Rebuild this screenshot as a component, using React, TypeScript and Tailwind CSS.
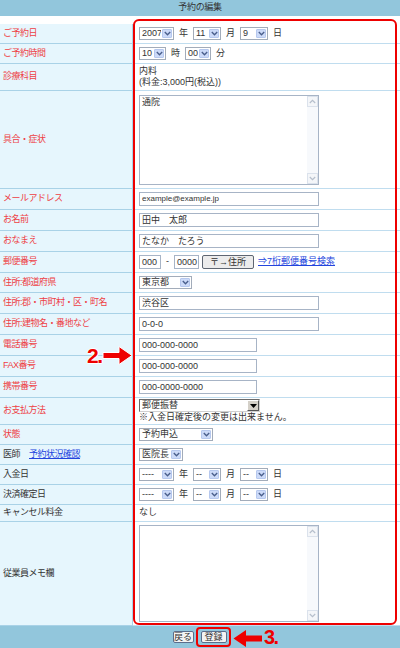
import React from "react";

const Chev = () => (
  <svg width="7" height="5" viewBox="0 0 7 5">
    <path d="M0.8 1L3.5 3.7L6.2 1" fill="none" stroke="#4a5f8c" strokeWidth="1.4" />
  </svg>
);

function Sel({ cls, v }: { cls: string; v: string }) {
  return (
    <div className={`flex h-[13px] items-stretch border border-[#a2acba] bg-white ${cls}`}>
      <span className="flex flex-1 items-center overflow-hidden whitespace-nowrap pl-[2px] leading-none">{v}</span>
      <span className="m-[1px] flex w-[10px] items-center justify-center rounded-[1px] border border-[#b6c8ee] bg-[#ccdaf8]">
        <Chev />
      </span>
    </div>
  );
}

function Inp({ cls, v, small }: { cls: string; v: string; small?: boolean }) {
  return (
    <div className={`flex h-[14px] items-center border border-[#a7b4c6] bg-white pl-[2px] leading-none ${small ? "text-[8px]" : ""} ${cls}`}>
      {v}
    </div>
  );
}

function TextArea({ cls, v }: { cls: string; v: string }) {
  return (
    <div className={`flex border border-[#a7b4c6] bg-white ${cls}`}>
      <div className="flex-1 pl-[2px] pt-[2px] leading-none">{v}</div>
      <div className="flex w-[11px] flex-col justify-between bg-[#f7f9fc]">
        <div className="flex h-[11px] items-center justify-center border border-[#dbe2ec] bg-[#f4f6f9]">
          <svg width="7" height="5" viewBox="0 0 7 5">
            <path d="M0.8 4L3.5 1.3L6.2 4" fill="none" stroke="#b6bfcc" strokeWidth="1.2" />
          </svg>
        </div>
        <div className="flex h-[11px] items-center justify-center border border-[#dbe2ec] bg-[#f4f6f9]">
          <svg width="7" height="5" viewBox="0 0 7 5">
            <path d="M0.8 1L3.5 3.7L6.2 1" fill="none" stroke="#b6bfcc" strokeWidth="1.2" />
          </svg>
        </div>
      </div>
    </div>
  );
}

function DateRow({ y, m, d }: { y: string; m: string; d: string }) {
  return (
    <div className="flex items-center gap-[4px]">
      <Sel cls="w-[35px]" v={y} />
      <span className="px-[1px]">年</span>
      <Sel cls="w-[28px]" v={m} />
      <span className="px-[1px]">月</span>
      <Sel cls="w-[28px]" v={d} />
      <span className="px-[1px]">日</span>
    </div>
  );
}

type Row = { h: string; label: React.ReactNode; red?: boolean; content: React.ReactNode };

export default function App() {
  const rows: Row[] = [
    { h: "h-[20px]", label: "ご予約日", red: true, content: <DateRow y="2007" m="11" d="9" /> },
    {
      h: "h-[20px]",
      label: "ご予約時間",
      red: true,
      content: (
        <div className="flex items-center gap-[4px]">
          <Sel cls="w-[27px]" v="10" />
          <span className="px-[1px]">時</span>
          <Sel cls="w-[26px]" v="00" />
          <span className="px-[1px]">分</span>
        </div>
      ),
    },
    {
      h: "h-[27px]",
      label: "診療科目",
      red: true,
      content: (
        <div className="flex flex-col leading-[11px]">
          <span>内料</span>
          <span>(料金:3,000円(税込))</span>
        </div>
      ),
    },
    { h: "h-[98px]", label: "具合・症状", red: true, content: <TextArea cls="h-[90px] w-[180px]" v="通院" /> },
    { h: "h-[21px]", label: "メールアドレス", red: true, content: <Inp cls="w-[180px]" v="example@example.jp" small /> },
    { h: "h-[21px]", label: "お名前", red: true, content: <Inp cls="w-[180px]" v="田中　太郎" /> },
    { h: "h-[21px]", label: "おなまえ", red: true, content: <Inp cls="w-[180px]" v="たなか　たろう" /> },
    {
      h: "h-[21px]",
      label: "郵便番号",
      red: true,
      content: (
        <div className="flex items-center">
          <Inp cls="w-[22px]" v="000" />
          <span className="px-[5px]">-</span>
          <Inp cls="w-[25px]" v="0000" />
          <div className="ml-[3px] flex h-[14px] w-[52px] items-center justify-center rounded-[2px] border border-[#5e6672] bg-[#ececec] leading-none">
            〒→住所
          </div>
          <span className="ml-[4px] text-[#2244dd] underline">⇒7桁郵便番号検索</span>
        </div>
      ),
    },
    { h: "h-[20px]", label: "住所:都道府県", red: true, content: <Sel cls="w-[53px]" v="東京都" /> },
    { h: "h-[21px]", label: "住所:郡・市町村・区・町名", red: true, content: <Inp cls="w-[180px]" v="渋谷区" /> },
    { h: "h-[21px]", label: "住所:建物名・番地など", red: true, content: <Inp cls="w-[180px]" v="0-0-0" /> },
    { h: "h-[21px]", label: "電話番号", red: true, content: <Inp cls="w-[118px]" v="000-000-0000" /> },
    { h: "h-[21px]", label: "FAX番号", red: true, content: <Inp cls="w-[118px]" v="000-000-0000" /> },
    { h: "h-[21px]", label: "携帯番号", red: true, content: <Inp cls="w-[118px]" v="000-0000-0000" /> },
    {
      h: "h-[27px]",
      label: "お支払方法",
      red: true,
      content: (
        <div className="flex flex-col">
          <div className="flex h-[13px] w-[121px] items-stretch border border-t-[#6b6b6b] border-l-[#6b6b6b] border-r-[#d0d0d0] border-b-[#d0d0d0] bg-white">
            <span className="flex flex-1 items-center pl-[2px] leading-none">郵便振替</span>
            <span className="flex w-[12px] items-center justify-center border border-t-white border-l-white border-r-[#555] border-b-[#555] bg-[#d4d0c8]">
              <svg width="7" height="4" viewBox="0 0 7 4">
                <path d="M0 0H7L3.5 4Z" fill="#000" />
              </svg>
            </span>
          </div>
          <span className="leading-[11px]">※入金日確定後の変更は出来ません。</span>
        </div>
      ),
    },
    { h: "h-[20px]", label: "状態", red: true, content: <Sel cls="w-[74px]" v="予約申込" /> },
    {
      h: "h-[20px]",
      label: (
        <span>
          医師<span className="ml-[9px] text-[#2244dd] underline">予約状況確認</span>
        </span>
      ),
      content: <Sel cls="w-[44px]" v="医院長" />,
    },
    { h: "h-[20px]", label: "入金日", content: <DateRow y="----" m="--" d="--" /> },
    { h: "h-[20px]", label: "決済確定日", content: <DateRow y="----" m="--" d="--" /> },
    { h: "h-[17px]", label: "キャンセル料金", content: <span>なし</span> },
    { h: "h-[104px]", label: "従業員メモ欄", content: <TextArea cls="h-[97px] w-[180px]" v="" /> },
  ];

  return (
    <div className="relative h-[648px] w-[400px] overflow-hidden bg-white font-['Liberation_Sans','Noto_Sans_CJK_JP',sans-serif] text-[9px] text-[#333]">
      <div className="flex h-[16px] items-center justify-center bg-[#92c6dc] tracking-[-0.3px]">予約の編集</div>
      <div className="h-[8px]" />
      <div className="flex flex-col">
        {rows.map((r, i) => (
          <div key={i} className={`flex ${r.h}`}>
            <div
              className={`flex w-[133px] items-center border-r border-b border-[#a9d2e7] bg-[#e6f6fd] pl-[3px] tracking-[-0.5px] ${
                r.red ? "text-[#ee3f45]" : "text-[#333]"
              }`}
            >
              {r.label}
            </div>
            <div className="flex flex-1 items-center border-b border-[#c0ddef] pl-[6px]">{r.content}</div>
          </div>
        ))}
      </div>
      <div className="flex h-[22px] items-center justify-center gap-[7px] bg-[#92c6dc] pr-[1px]">
        <div className="flex h-[12px] w-[21px] items-center justify-center rounded-[2px] border border-[#5b6e8c] bg-[#f3f3f3] leading-none">
          戻る
        </div>
        <div className="flex h-[12px] w-[26px] items-center justify-center rounded-[2px] border border-[#5b6e8c] bg-[#f3f3f3] leading-none">
          登録
        </div>
      </div>

      {/* annotations */}
      <div className="pointer-events-none absolute left-[133px] top-[19px] h-[606px] w-[264px] rounded-[6px] border-2 border-[#ee0000]" />
      <div className="pointer-events-none absolute left-[196px] top-[627px] h-[20px] w-[35px] rounded-[4px] border-2 border-[#ee0000]" />

      <div className="absolute left-[87px] top-[345px] font-['Liberation_Sans'] text-[21px] font-bold leading-none tracking-[-1.5px] text-[#ee0000] [text-shadow:1px_0_0_#fff,-1px_0_0_#fff,0_1px_0_#fff,0_-1px_0_#fff]">
        2.
      </div>
      <svg className="absolute left-[102px] top-[345px]" width="32" height="21" viewBox="0 0 32 21">
        <path d="M1 7.5H17V1.5L30 10.5L17 19.5V13.5H1Z" fill="#ee0000" stroke="#fff" strokeWidth="1" />
      </svg>

      <svg className="absolute left-[232px] top-[629px]" width="31" height="19" viewBox="0 0 31 19">
        <path d="M30 6.5H14V1L1.5 9.5L14 18V12.5H30Z" fill="#ee0000" />
      </svg>
      <div className="absolute left-[264px] top-[627px] font-['Liberation_Sans'] text-[20px] font-bold leading-[20px] tracking-[-1.5px] text-[#ee0000]">
        3.
      </div>
    </div>
  );
}
